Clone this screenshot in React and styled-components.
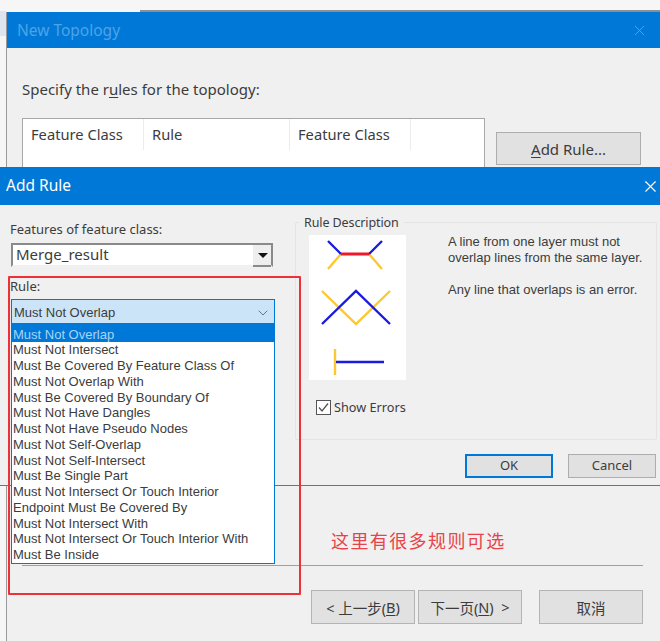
import React from "react";
import styled, { createGlobalStyle } from "styled-components";
import { ChevronDown, X } from "lucide-react";

const RULES = [
  "Must Not Overlap",
  "Must Not Intersect",
  "Must Be Covered By Feature Class Of",
  "Must Not Overlap With",
  "Must Be Covered By Boundary Of",
  "Must Not Have Dangles",
  "Must Not Have Pseudo Nodes",
  "Must Not Self-Overlap",
  "Must Not Self-Intersect",
  "Must Be Single Part",
  "Must Not Intersect Or Touch Interior",
  "Endpoint Must Be Covered By",
  "Must Not Intersect With",
  "Must Not Intersect Or Touch Interior With",
  "Must Be Inside",
];

function RuleDiagram() {
  return (
    <svg width="97" height="145" viewBox="0 0 97 145" fill="none" strokeWidth="2.4">
      <path d="M32 19L19 34M60 19L73 34" stroke="#fdc82f" />
      <path d="M19 6L32 19M60 19L73 6" stroke="#1a1ae0" />
      <path d="M32 19H60" stroke="#f01828" strokeWidth="3" />
      <path d="M13 56L47 89L81 56" stroke="#fdc82f" />
      <path d="M13 89L47 56L81 89" stroke="#1a1ae0" />
      <path d="M26 114V140" stroke="#fdc82f" />
      <path d="M27 127H75" stroke="#1a1ae0" />
    </svg>
  );
}

export default function App() {
  return (
    <Desktop>
      <GlobalStyle />
      <TopEdge />
      <SideStrip />
      <BackWindow>
        <TitleBar $height={36} $pad={10}>
          <TitleText $dim>New Topology</TitleText>
          <CloseBox $dim $w={42}>
            <X size={17} strokeWidth={1.2} />
          </CloseBox>
        </TitleBar>
        <BackBody>
          <Prompt>
            Specify the r<u>u</u>les for the topology:
          </Prompt>
          <TableRow>
            <RuleTable>
              <HeadCell $w={121}>Feature Class</HeadCell>
              <HeadCell $w={146}>Rule</HeadCell>
              <HeadCell $w={121}>Feature Class</HeadCell>
            </RuleTable>
            <AddRuleBtn>
              <u>A</u>dd Rule...
            </AddRuleBtn>
          </TableRow>
          <Footer>
            <Separator />
            <WizardButtons>
              <WizardBtn>
                &lt; 上一步(<u>B</u>)
              </WizardBtn>
              <WizardBtn>
                下一页(<u>N</u>)&nbsp; &gt;
              </WizardBtn>
              <WizardBtn $cancel>取消</WizardBtn>
            </WizardButtons>
          </Footer>
        </BackBody>
      </BackWindow>

      <AddRuleWindow>
        <TitleBar $height={38} $pad={6}>
          <TitleText $lift>Add Rule</TitleText>
          <CloseBox $w={20}>
            <X size={19} strokeWidth={1.4} />
          </CloseBox>
        </TitleBar>
        <DialogBody>
          <LeftColumn>
            <FieldLabel>Features of feature class:</FieldLabel>
            <ClassCombo>
              <span>Merge_result</span>
              <ComboArrow />
            </ClassCombo>
            <FieldLabel $gap>Rule:</FieldLabel>
            <RuleSelect>
              <span>Must Not Overlap</span>
              <ChevronDown size={16} strokeWidth={1.2} color="#555" />
            </RuleSelect>
          </LeftColumn>
          <RightColumn>
            <GroupBox>
              <GroupLegend>Rule Description</GroupLegend>
              <DiagramPane>
                <RuleDiagram />
                <ShowErrors>
                  <CheckBox>
                    <svg width="13" height="13" viewBox="0 0 13 13" fill="none">
                      <path d="M2 6.5L5 10L11 2.5" stroke="#555" strokeWidth="1.3" />
                    </svg>
                  </CheckBox>
                  Show Errors
                </ShowErrors>
              </DiagramPane>
              <Description>
                <p>
                  A line from one layer must not
                  <br />
                  overlap lines from the same layer.
                </p>
                <p>Any line that overlaps is an error.</p>
              </Description>
            </GroupBox>
            <DialogButtons>
              <DialogBtn $primary>OK</DialogBtn>
              <DialogBtn>Cancel</DialogBtn>
            </DialogButtons>
          </RightColumn>
        </DialogBody>
      </AddRuleWindow>

      <RuleList>
        {RULES.map((rule, i) => (
          <RuleItem key={rule} $active={i === 0}>
            {rule}
          </RuleItem>
        ))}
      </RuleList>
      <RedBox />
      <RedNote>这里有很多规则可选</RedNote>
    </Desktop>
  );
}

const GlobalStyle = createGlobalStyle`
  html, body {
    margin: 0;
    padding: 0;
    background: #f6f6f6;
  }
  * {
    box-sizing: border-box;
  }
  u {
    text-underline-offset: 2px;
  }
`;

const UI_FONT = `"Noto Sans", "Noto Sans CJK SC", sans-serif`;
const LIST_FONT = `"Liberation Sans", sans-serif`;

const Desktop = styled.div`
  position: relative;
  width: 660px;
  height: 641px;
  overflow: hidden;
  background: #f6f6f6;
  font-family: ${UI_FONT};
  color: #3c3c3c;
`;

const TopEdge = styled.div`
  position: absolute;
  left: 140px;
  right: 0;
  top: 10px;
  height: 2px;
  background: #8f8f8f;
`;

const SideStrip = styled.div`
  position: absolute;
  left: 0;
  top: 11px;
  width: 6px;
  height: 25px;
  background: #dde5ee;
`;

const BackWindow = styled.div`
  position: absolute;
  left: 6px;
  top: 12px;
  width: 654px;
  height: 629px;
  display: flex;
  flex-direction: column;
  background: #f0f0f0;
  border-left: 1px solid #9a9a9a;
`;

const AddRuleWindow = styled.div`
  position: absolute;
  left: 0;
  top: 167px;
  width: 660px;
  height: 319px;
  display: flex;
  flex-direction: column;
  background: #f0f0f0;
  border-bottom: 1px solid #1e88dc;
`;

const TitleBar = styled.div`
  flex: none;
  height: ${(p) => p.$height}px;
  padding-left: ${(p) => p.$pad}px;
  display: flex;
  align-items: center;
  justify-content: space-between;
  background: #0078d7;
`;

const TitleText = styled.div`
  font-size: 15.5px;
  margin-top: ${(p) => (p.$lift ? "-2px" : "0")};
  color: ${(p) => (p.$dim ? "#4ea3e6" : "#fff")};
`;

const CloseBox = styled.div`
  width: ${(p) => p.$w}px;
  display: flex;
  justify-content: center;
  color: ${(p) => (p.$dim ? "#5aabea" : "#fff")};
`;

const BackBody = styled.div`
  flex: 1;
  display: flex;
  flex-direction: column;
  padding: 31px 17px 17px 15px;
`;

const Prompt = styled.div`
  font-size: 15px;
  line-height: 20px;
`;

const TableRow = styled.div`
  display: flex;
  align-items: flex-start;
  gap: 11px;
  margin-top: 19px;
`;

const RuleTable = styled.div`
  width: 463px;
  height: 100px;
  display: flex;
  align-items: flex-start;
  background: #fff;
  border: 1px solid #a8a8a8;
`;

const HeadCell = styled.div`
  width: ${(p) => p.$w}px;
  height: 31px;
  padding-left: 8px;
  font-size: 14.7px;
  line-height: 30px;
  border-right: 1px solid #ececec;
`;

const AddRuleBtn = styled.div`
  width: 145px;
  height: 33px;
  margin-top: 14px;
  display: flex;
  align-items: center;
  justify-content: center;
  font-size: 15px;
  background: #e1e1e1;
  border: 1px solid #adadad;
`;

const Footer = styled.div`
  margin-top: auto;
`;

const Separator = styled.div`
  height: 1px;
  background: #a0a0a0;
`;

const WizardButtons = styled.div`
  display: flex;
  justify-content: flex-end;
  gap: 3px;
  margin-top: 24px;
`;

const WizardBtn = styled.div`
  width: 104px;
  height: 34px;
  margin-left: ${(p) => (p.$cancel ? "14px" : "0")};
  display: flex;
  align-items: center;
  justify-content: center;
  font-size: 14.5px;
  background: #e1e1e1;
  border: 1px solid #b4b4b4;
`;

const DialogBody = styled.div`
  flex: 1;
  display: flex;
  justify-content: space-between;
  padding: 0 3px 0 10px;
`;

const LeftColumn = styled.div`
  width: 265px;
  padding-top: 15px;
  display: flex;
  flex-direction: column;
`;

const FieldLabel = styled.div`
  font-size: 13px;
  line-height: 18px;
  margin-top: ${(p) => (p.$gap ? "10px" : "0")};
`;

const ClassCombo = styled.div`
  width: 262px;
  height: 24px;
  margin: 5px 0 0 1px;
  padding: 0 0 2px 3px;
  display: flex;
  align-items: center;
  justify-content: space-between;
  font-size: 15px;
  background: #fff;
  border: 2px solid;
  border-color: #8a8a8a #8a8a8a #f0f0f0 #8a8a8a;
`;

const ComboArrow = styled.div`
  flex: none;
  align-self: flex-start;
  width: 18px;
  height: 22px;
  background: #eee;
  border-bottom: 2px solid #8a8a8a;
  position: relative;

  &::after {
    content: "";
    position: absolute;
    left: 5px;
    top: 8px;
    border: 5px solid transparent;
    border-top-color: #111;
    border-bottom-width: 0;
  }
`;

const RuleSelect = styled.div`
  width: 264px;
  height: 25px;
  margin: 4px 0 0 1px;
  padding: 2px 3px 0 2px;
  display: flex;
  align-items: center;
  justify-content: space-between;
  font-family: ${LIST_FONT};
  font-size: 13px;
  background: #cce4f7;
  border: 1px solid #0078d7;
`;

const RightColumn = styled.div`
  width: 362px;
  padding-top: 17px;
  display: flex;
  flex-direction: column;
`;

const GroupBox = styled.div`
  position: relative;
  height: 218px;
  display: flex;
  padding: 12px 0 0 13px;
  border: 1px solid #e4e4e4;
  border-radius: 2px;
`;

const GroupLegend = styled.div`
  position: absolute;
  left: 3px;
  top: -8px;
  padding: 0 5px;
  font-size: 12.5px;
  letter-spacing: -0.1px;
  line-height: 16px;
  background: #f0f0f0;
`;

const DiagramPane = styled.div`
  width: 97px;
  display: flex;
  flex-direction: column;

  & > svg {
    background: #fff;
    display: block;
  }
`;

const ShowErrors = styled.div`
  width: 120px;
  margin: 20px 0 0 7px;
  display: flex;
  align-items: center;
  gap: 3px;
  font-size: 12.7px;
  line-height: 15px;
`;

const CheckBox = styled.div`
  width: 15px;
  height: 15px;
  display: flex;
  align-items: center;
  justify-content: center;
  background: #fff;
  border: 1px solid #555;
`;

const Description = styled.div`
  margin: -1px 0 0 42px;
  font-family: ${LIST_FONT};
  font-size: 13px;
  line-height: 16px;

  & p {
    margin: 0 0 16px;
  }
`;

const DialogButtons = styled.div`
  display: flex;
  gap: 15px;
  margin: 14px 1px 0 auto;
`;

const DialogBtn = styled.div`
  width: 88px;
  height: 24px;
  padding-bottom: 2px;
  display: flex;
  align-items: center;
  justify-content: center;
  font-size: 13px;
  background: #e1e1e1;
  border: ${(p) => (p.$primary ? "2px solid #0078d7" : "1px solid #adadad")};
`;

const RuleList = styled.div`
  position: absolute;
  left: 11px;
  top: 324px;
  width: 264px;
  height: 240px;
  background: #fff;
  border: 1px solid #0078d7;
  border-top: 0;
`;

const RuleItem = styled.div`
  height: ${(p) => (p.$active ? "18.25px" : "15.75px")};
  padding: ${(p) => (p.$active ? "2.5px" : "0")} 0 0 1px;
  font-family: ${LIST_FONT};
  font-size: 13px;
  line-height: 15.75px;
  white-space: nowrap;
  background: ${(p) => (p.$active ? "#0078d7" : "transparent")};
  color: ${(p) => (p.$active ? "#a8d4f5" : "#3c3c3c")};
`;

const RedBox = styled.div`
  position: absolute;
  left: 8px;
  top: 276px;
  width: 293px;
  height: 319px;
  border: 2px solid #ee3038;
  border-radius: 1px;
  pointer-events: none;
`;

const RedNote = styled.div`
  position: absolute;
  left: 331px;
  top: 527px;
  font-size: 18px;
  line-height: 26px;
  letter-spacing: 1.4px;
  white-space: nowrap;
  color: #e8434a;
  font-family: "Noto Sans CJK SC", sans-serif;
`;
